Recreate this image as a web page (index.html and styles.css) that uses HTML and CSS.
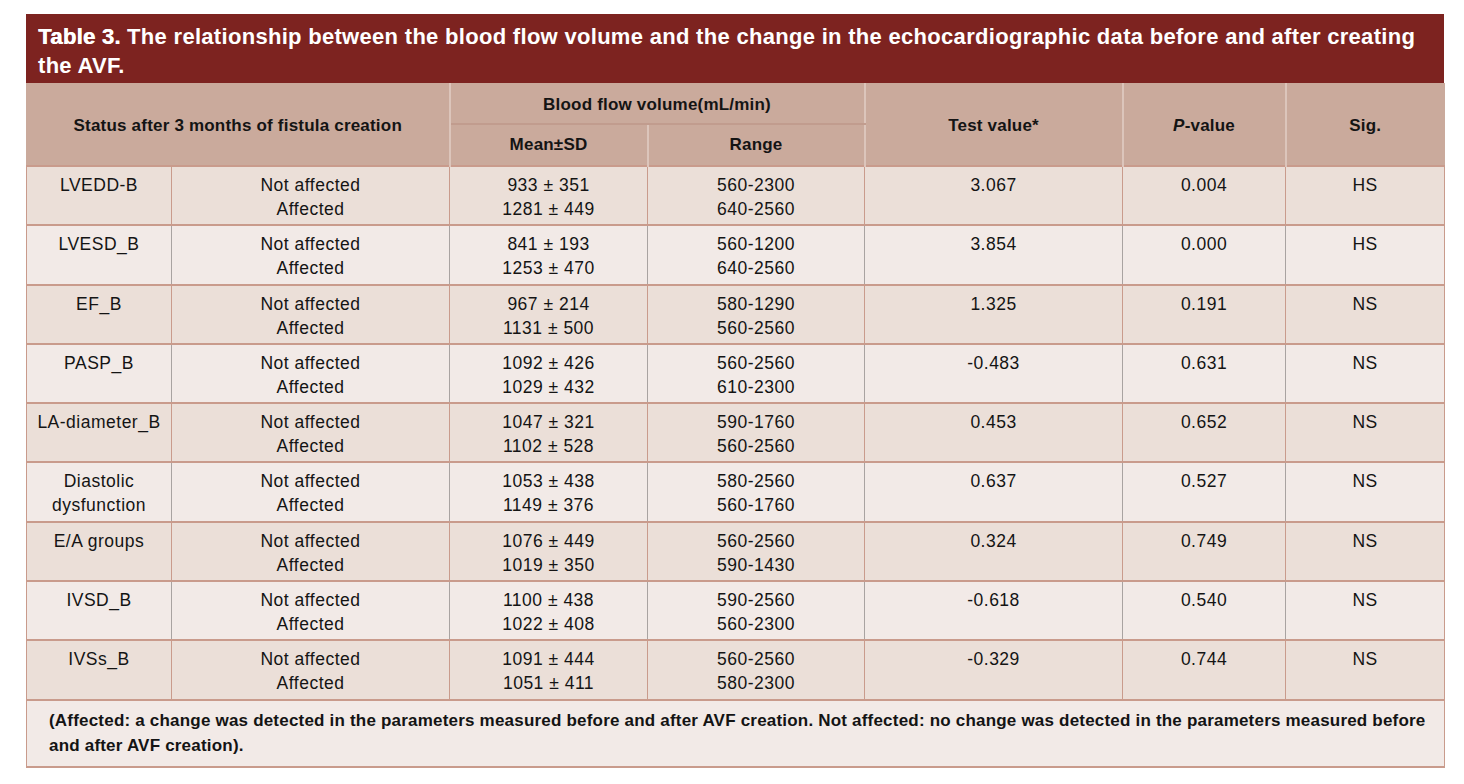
FILE: index.html
```html
<!DOCTYPE html>
<html lang="en">
<head>
<meta charset="utf-8">
<title>Table 3</title>
<link rel="stylesheet" href="styles.css">
</head>
<body>
<div class="wrap">
  <div class="caption"><span class="label">Table 3.</span> The relationship between the blood flow volume and the change in the echocardiographic data before and after creating the AVF.</div>
  <table class="data">
    <colgroup>
      <col class="c1"><col class="c2"><col class="c3"><col class="c4"><col class="c5"><col class="c6"><col class="c7">
    </colgroup>
    <thead>
      <tr class="h1">
        <th colspan="2" rowspan="2">Status after 3 months of fistula creation</th>
        <th colspan="2" class="group">Blood flow volume(mL/min)</th>
        <th rowspan="2">Test value*</th>
        <th rowspan="2"><i>P</i>-value</th>
        <th rowspan="2">Sig.</th>
      </tr>
      <tr class="h2">
        <th>Mean±SD</th>
        <th>Range</th>
      </tr>
    </thead>
    <tbody>
      <tr class="odd"><td>LVEDD-B</td><td>Not affected<br>Affected</td><td>933 ± 351<br>1281 ± 449</td><td>560-2300<br>640-2560</td><td>3.067</td><td>0.004</td><td>HS</td></tr>
      <tr class="even"><td>LVESD_B</td><td>Not affected<br>Affected</td><td>841 ± 193<br>1253 ± 470</td><td>560-1200<br>640-2560</td><td>3.854</td><td>0.000</td><td>HS</td></tr>
      <tr class="odd"><td>EF_B</td><td>Not affected<br>Affected</td><td>967 ± 214<br>1131 ± 500</td><td>580-1290<br>560-2560</td><td>1.325</td><td>0.191</td><td>NS</td></tr>
      <tr class="even"><td>PASP_B</td><td>Not affected<br>Affected</td><td>1092 ± 426<br>1029 ± 432</td><td>560-2560<br>610-2300</td><td>-0.483</td><td>0.631</td><td>NS</td></tr>
      <tr class="odd"><td>LA-diameter_B</td><td>Not affected<br>Affected</td><td>1047 ± 321<br>1102 ± 528</td><td>590-1760<br>560-2560</td><td>0.453</td><td>0.652</td><td>NS</td></tr>
      <tr class="even"><td>Diastolic<br>dysfunction</td><td>Not affected<br>Affected</td><td>1053 ± 438<br>1149 ± 376</td><td>580-2560<br>560-1760</td><td>0.637</td><td>0.527</td><td>NS</td></tr>
      <tr class="odd"><td>E/A groups</td><td>Not affected<br>Affected</td><td>1076 ± 449<br>1019 ± 350</td><td>560-2560<br>590-1430</td><td>0.324</td><td>0.749</td><td>NS</td></tr>
      <tr class="even"><td>IVSD_B</td><td>Not affected<br>Affected</td><td>1100 ± 438<br>1022 ± 408</td><td>590-2560<br>560-2300</td><td>-0.618</td><td>0.540</td><td>NS</td></tr>
      <tr class="odd"><td>IVSs_B</td><td>Not affected<br>Affected</td><td>1091 ± 444<br>1051 ± 411</td><td>560-2560<br>580-2300</td><td>-0.329</td><td>0.744</td><td>NS</td></tr>
    </tbody>
    <tfoot>
      <tr><td colspan="7" class="note">(Affected: a change was detected in the parameters measured before and after AVF creation. Not affected: no change was detected in the parameters measured before and after AVF creation).</td></tr>
    </tfoot>
  </table>
</div>
</body>
</html>
```

FILE: styles.css
```css
html, body {
  margin: 0;
  padding: 0;
  background: #ffffff;
}

body {
  font-family: "Liberation Sans", Arial, sans-serif;
  color: #141414;
}

.wrap {
  width: 1418px;
  padding: 14px 0 0 26px;
}

.caption {
  background: #7d2320;
  color: #ffffff;
  font-weight: bold;
  font-size: 22px;
  letter-spacing: 0.3px;
  line-height: 29px;
  padding: 8px 12px 3px 12px;
}

.caption .label {
  font-weight: 900;
  text-shadow: 0.6px 0 0 #ffffff;
}

.data {
  width: 1418px;
  border-collapse: collapse;
  table-layout: fixed;
}

.c1 { width: 145px; }
.c2 { width: 278px; }
.c3 { width: 198px; }
.c4 { width: 217px; }
.c5 { width: 258px; }
.c6 { width: 163px; }
.c7 { width: 159px; }

thead th {
  background: #caaa9c;
  font-weight: bold;
  font-size: 17px;
  letter-spacing: 0.2px;
  color: #141414;
  border-left: 2px solid #dcc5bb;
  border-right: 2px solid #dcc5bb;
  padding: 0;
  text-align: center;
  vertical-align: middle;
}

thead tr.h1 th {
  height: 37px;
  padding-top: 3px;
}

thead tr.h2 th {
  height: 40px;
}

thead th.group {
  border-bottom: 2px solid #c19c8e;
}

thead tr:first-child th:first-child {
  border-left: 1px solid #caaa9c;
}

thead tr:first-child th:last-child {
  border-right: 1px solid #caaa9c;
}

tbody td {
  font-size: 17.5px;
  letter-spacing: 0.5px;
  line-height: 24px;
  text-align: center;
  vertical-align: top;
  padding: 6px 4px 3px;
  height: 48.3px;
  border-top: 2px solid #c99b8c;
}

tr.odd td {
  background: #ebdfd8;
  border-left: 1px solid #c99b8c;
  border-right: 1px solid #c99b8c;
}

tr.even td {
  background: #f2eae7;
  border-left: 1px solid #a9a3a1;
  border-right: 1px solid #a9a3a1;
}

tbody tr td:first-child {
  border-left: 1px solid #c99b8c;
}

tbody tr td:last-child {
  border-right: 1px solid #c99b8c;
}

.note {
  background: #f2eae7;
  font-weight: bold;
  font-size: 17px;
  letter-spacing: 0.2px;
  line-height: 25px;
  text-align: left;
  padding: 7px 8px 8px 22px;
  border-top: 2px solid #c99b8c;
  border-left: 1px solid #c99b8c;
  border-right: 1px solid #c99b8c;
  border-bottom: 2px solid #c99b8c;
}
```
